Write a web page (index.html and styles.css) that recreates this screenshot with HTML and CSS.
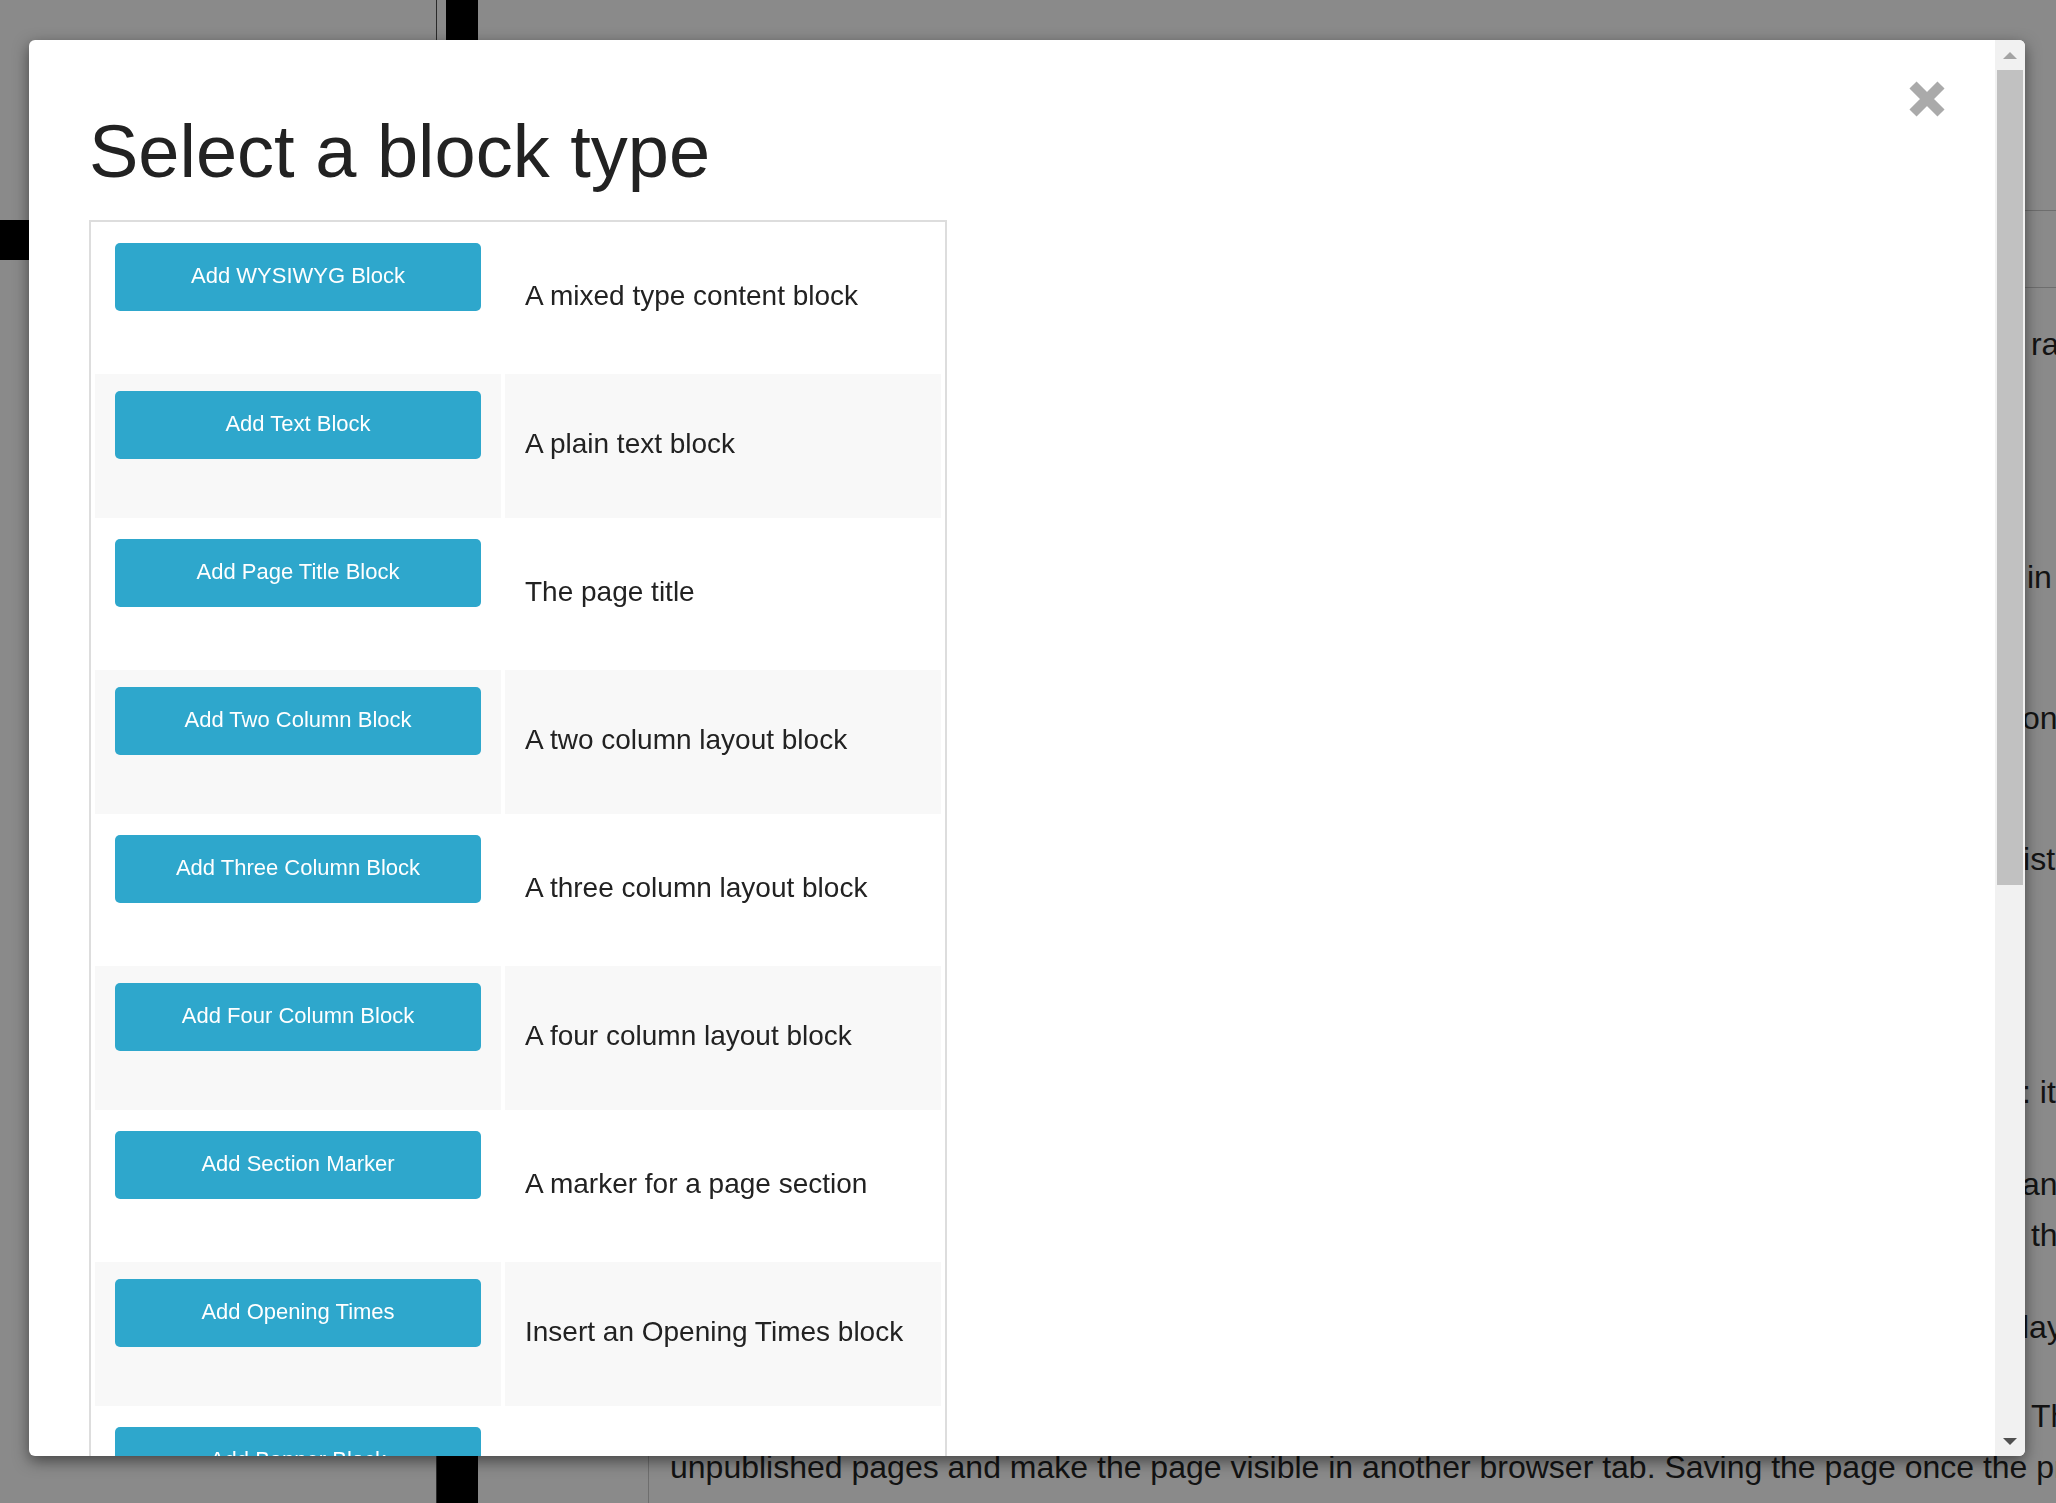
FILE: index.html
```html
<!DOCTYPE html>
<html lang="en">
<head>
<meta charset="utf-8">
<title>Select a block type</title>
<link rel="stylesheet" href="styles.css">
</head>
<body>
<div class="page">
  <div class="side">
    <div class="side-tab"></div>
  </div>
  <div class="rail">
    <div class="rail-top"></div>
  </div>
  <div class="content">
    <div class="content-head"></div>
    <div class="content-tabs"></div>
    <div class="content-body">
      <div class="ln peek first">&nbsp;rather</div>
      <div class="ln peek peek-r para-4">in</div>
      <div class="ln peek para-2">on</div>
      <div class="ln peek peek-l para-2">list</div>
      <div class="ln peek para-4">: it</div>
      <div class="ln peek para">and</div>
      <div class="ln peek">&nbsp;the</div>
      <div class="ln peek para">lay</div>
      <div class="ln peek para-s">&nbsp;The</div>
      <div class="ln">unpublished pages and make the page visible in another browser tab. Saving the page once the preview is open</div>
    </div>
  </div>
</div>

<div class="modal">
  <div class="modal-main">
    <div class="modal-head">
      <h1 class="modal-title">Select a block type</h1>
      <button class="close" type="button" aria-label="Close">
        <svg width="38" height="38" viewBox="0 0 38 38" aria-hidden="true">
          <path d="M5 5 L33 33 M33 5 L5 33" stroke="#aaaaaa" stroke-width="10" fill="none"/>
        </svg>
      </button>
    </div>
    <div class="block-list">
      <table class="blocks">
        <tr><td class="act"><button class="add-btn" type="button">Add WYSIWYG Block</button></td><td class="desc">A mixed type content block</td></tr>
        <tr><td class="act"><button class="add-btn" type="button">Add Text Block</button></td><td class="desc">A plain text block</td></tr>
        <tr><td class="act"><button class="add-btn" type="button">Add Page Title Block</button></td><td class="desc">The page title</td></tr>
        <tr><td class="act"><button class="add-btn" type="button">Add Two Column Block</button></td><td class="desc">A two column layout block</td></tr>
        <tr><td class="act"><button class="add-btn" type="button">Add Three Column Block</button></td><td class="desc">A three column layout block</td></tr>
        <tr><td class="act"><button class="add-btn" type="button">Add Four Column Block</button></td><td class="desc">A four column layout block</td></tr>
        <tr><td class="act"><button class="add-btn" type="button">Add Section Marker</button></td><td class="desc">A marker for a page section</td></tr>
        <tr><td class="act"><button class="add-btn" type="button">Add Opening Times</button></td><td class="desc">Insert an Opening Times block</td></tr>
        <tr><td class="act"><button class="add-btn" type="button">Add Banner Block</button></td><td class="desc">A banner image block</td></tr>
      </table>
    </div>
  </div>
  <div class="scrollbar">
    <div class="sb-btn"><span class="tri-up"></span></div>
    <div class="sb-thumb"></div>
    <div class="sb-btn sb-end"><span class="tri-down"></span></div>
  </div>
</div>
</body>
</html>
```

FILE: styles.css
```css
html, body {
  margin: 0;
  padding: 0;
}

body {
  width: 2056px;
  height: 1503px;
  overflow: hidden;
  background: #8a8a8a;
  font-family: "Liberation Sans", Arial, sans-serif;
  color: #222222;
}

/* ---------- dimmed page behind the dialog ---------- */
.page {
  display: flex;
  height: 1503px;
}

.side {
  width: 436px;
  flex: none;
}

.side-tab {
  margin-top: 220px;
  width: 60px;
  height: 40px;
  background: #000;
}

.rail {
  width: 41px;
  flex: none;
  background: #000;
  border-left: 1px solid #2a2a2a;
}

.rail-top {
  width: 9px;
  height: 40px;
  background: #8a8a8a;
}

.content {
  flex: 1;
  margin-left: 170px;
  min-width: 0;
}

.content-head {
  height: 210px;
  border-bottom: 1px solid #6e6e6e;
}

.content-tabs {
  height: 76px;
  border-bottom: 1px solid #6e6e6e;
}

.content-body {
  border-left: 1px solid #6e6e6e;
  padding-left: 21px;
  height: 1300px;
  font-size: 32px;
  line-height: 51px;
  color: #131313;
  white-space: nowrap;
}

.ln {
  height: 51px;
}

.peek {
  padding-left: 1352px;
}

.peek-r {
  padding-left: 1357px;
}

.peek-l {
  padding-left: 1346px;
}

.first { margin-top: 31px; }
.para { margin-top: 41px; }
.para-s { margin-top: 38px; }
.para-2 { margin-top: 90px; }
.para-4 { margin-top: 182px; }

/* ---------- dialog ---------- */
.modal {
  position: fixed;
  left: 29px;
  top: 40px;
  width: 1996px;
  height: 1416px;
  background: #fff;
  border-radius: 6px;
  box-shadow: 0 5px 15px rgba(0, 0, 0, 0.5);
  overflow: hidden;
  display: flex;
}

.modal-main {
  flex: 1;
  min-width: 0;
  padding: 0 60px;
  overflow: hidden;
}

.modal-head {
  display: flex;
  justify-content: space-between;
  align-items: flex-start;
}

.modal-title {
  margin: 72px 0 28px;
  font-size: 74px;
  line-height: 80px;
  font-weight: 400;
  color: #222222;
}

.close {
  margin: 40px -11px 0 0;
  padding: 0;
  border: 0;
  background: none;
  width: 38px;
  height: 38px;
  display: block;
}

.close svg {
  display: block;
}

.block-list {
  width: 854px;
  border: 2px solid #dddddd;
}

.blocks {
  border-collapse: separate;
  border-spacing: 4px;
}

.blocks tr {
  height: 144px;
}

.blocks tr:nth-child(even) td {
  background: #f8f8f8;
}

.act {
  width: 366px;
  padding: 17px 20px;
  vertical-align: top;
}

.desc {
  width: 396px;
  padding: 0 20px 5px;
  vertical-align: middle;
  font-size: 28px;
  color: #222222;
}

.add-btn {
  display: block;
  width: 366px;
  height: 68px;
  box-sizing: border-box;
  padding: 0 12px 4px;
  border: 0;
  border-radius: 5px;
  background: #2ea7cc;
  color: #ffffff;
  font-family: "Liberation Sans", Arial, sans-serif;
  font-size: 22px;
  line-height: 31px;
  text-align: center;
  vertical-align: top;
}

/* ---------- fake scrollbar ---------- */
.scrollbar {
  width: 30px;
  flex: none;
  background: #f1f1f1;
  display: flex;
  flex-direction: column;
}

.sb-btn {
  height: 30px;
  display: flex;
  align-items: center;
  justify-content: center;
}

.sb-end {
  margin-top: auto;
}

.tri-up {
  width: 0;
  height: 0;
  border-left: 7px solid transparent;
  border-right: 7px solid transparent;
  border-bottom: 7px solid #a3a3a3;
}

.tri-down {
  width: 0;
  height: 0;
  border-left: 7px solid transparent;
  border-right: 7px solid transparent;
  border-top: 7px solid #505050;
}

.sb-thumb {
  margin: 0 2px;
  height: 815px;
  background: #c1c1c1;
}
```
